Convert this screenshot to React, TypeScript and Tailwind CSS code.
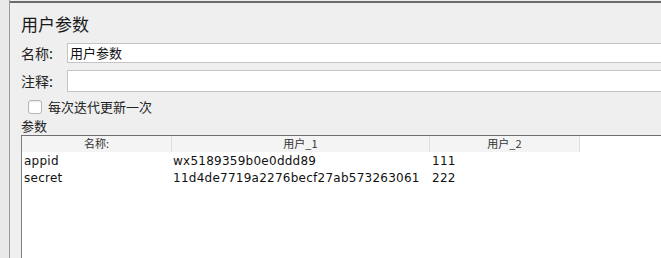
import React from "react";

const cjk = { fontFamily: '"Noto Sans CJK SC", "Noto Sans", sans-serif' };
const mono = { fontFamily: '"DejaVu Sans", "Noto Sans CJK SC", sans-serif' };

export default function App() {
  const rows = [
    ["appid", "wx5189359b0e0ddd89", "111"],
    ["secret", "11d4de7719a2276becf27ab573263061", "222"],
  ];
  return (
    <div className="w-[661px] h-[258px] overflow-hidden flex bg-[#ebebeb]" style={cjk}>
      <div className="w-[9px] shrink-0 bg-[#e9e9e9]" />
      <div className="flex-1 flex flex-col border-l border-[#9c9c9c] bg-[#efefef] pt-[1px]">
        <div className="border-t-2 border-[#6b6b6b]" />
        <div className="pl-[11px] pt-[11px] text-[17px] leading-[20px] text-[#1a1a1a]">用户参数</div>
        <div className="flex items-center mt-[9px] h-[20px]">
          <div className="w-[57px] pl-[11px] text-[14px] text-[#222]">名称:</div>
          <div className="flex-1 h-[20px] bg-white border-t border-b border-l border-[#c4c4c4] pl-[2px] text-[13px] leading-[18px] text-[#111]">用户参数</div>
        </div>
        <div className="flex items-center mt-[7px] h-[22px]">
          <div className="w-[57px] pl-[11px] text-[14px] text-[#222]">注释:</div>
          <div className="flex-1 h-[22px] bg-white border-t border-b border-l border-[#c4c4c4]" />
        </div>
        <div className="flex items-center mt-[5px] pl-[18px] h-[20px]">
          <div className="w-[14px] h-[14px] rounded-[3px] bg-white border border-[#b5b5b5] shadow-[inset_0_1px_1px_rgba(0,0,0,0.08)]" />
          <div className="ml-[6px] text-[13px] text-[#222]">每次迭代更新一次</div>
        </div>
        <div className="pl-[11px] mt-[0px] text-[13px] leading-[18px] text-[#222]">参数</div>
        <div className="flex-1 ml-[11px] bg-white border-l border-t border-[#808080] border-t-[#6f6f6f]" style={mono}>
          <div className="flex h-[16px] text-[11px] leading-[14px] text-[#333]" style={cjk}>
            <div className="w-[150px] bg-[#f4f4f4] border-r border-[#dedede] text-center">名称:</div>
            <div className="w-[258px] bg-[#f4f4f4] border-r border-[#dedede] text-center">用户_1</div>
            <div className="w-[150px] bg-[#f4f4f4] border-r border-[#dedede] text-center">用户_2</div>
          </div>
          {rows.map((r) => (
            <div key={r[0]} className="flex h-[17px] text-[12px] leading-[18px] tracking-[0.25px] text-[#111]">
              <div className="w-[150px] pl-[2px]">{r[0]}</div>
              <div className="w-[258px] pl-[1px]">{r[1]}</div>
              <div className="w-[150px] pl-[2px]">{r[2]}</div>
            </div>
          ))}
        </div>
      </div>
    </div>
  );
}
